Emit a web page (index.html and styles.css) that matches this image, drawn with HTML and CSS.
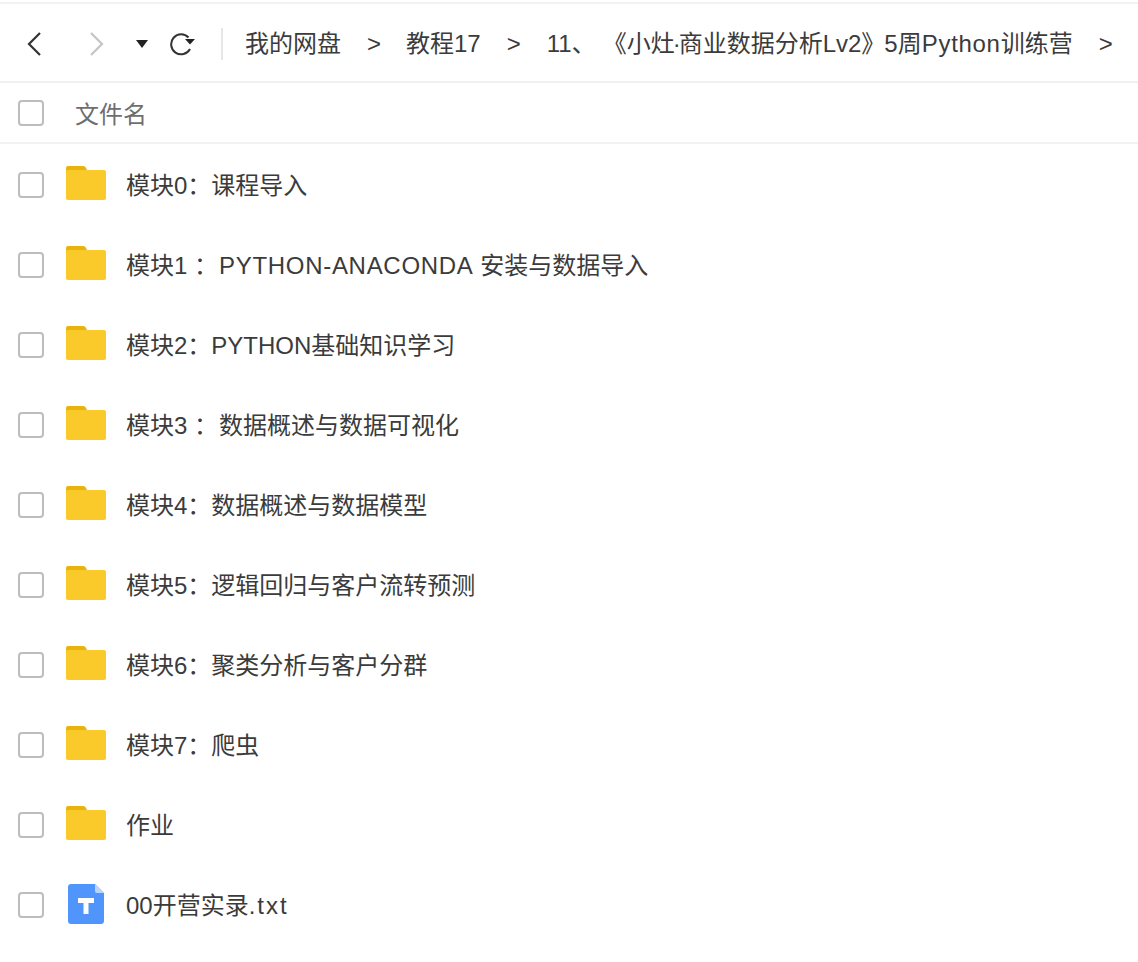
FILE: index.html
```html
<!DOCTYPE html>
<html lang="zh-CN">
<head>
<meta charset="utf-8">
<title>文件列表</title>
<link rel="stylesheet" href="styles.css">
</head>
<body>
<svg class="defs" width="0" height="0" aria-hidden="true">
  <symbol id="folder" viewBox="0 0 40 34">
    <path fill="#e8b40c" d="M2 0h15c1.500 0 2.500.7 3 2l1 2v8H0V2C0 .8.800 0 2 0z"/>
    <path fill="#f9ca2a" d="M0 6c0-1.200.8-2 2-2h36c1.200 0 2 .8 2 2v26c0 1.200-.8 2-2 2H2c-1.200 0-2-.8-2-2z"/>
  </symbol>
</svg>
<header class="toolbar">
  <svg class="nav-icon" width="20" height="26" viewBox="0 0 20 26"><path d="M15 2 4 13l11 11" fill="none" stroke="#333" stroke-width="2.200"/></svg>
  <svg class="nav-icon forward" width="20" height="26" viewBox="0 0 20 26"><path d="M5 2l11 11L5 24" fill="none" stroke="#c4c4c4" stroke-width="2.200"/></svg>
  <svg class="caret" width="12" height="8" viewBox="0 0 12 8"><path d="M0 0h12L6 8z" fill="#222"/></svg>
  <svg class="refresh" width="26" height="24" viewBox="0 0 26 24"><path d="M18.500 5.500A10 10 0 1 0 20 17" fill="none" stroke="#333" stroke-width="2"/><path d="M15 7h10l-5 5.500z" fill="#222"/></svg>
  <span class="divider"></span>
  <nav class="crumbs">
    <span>我的网盘</span><span class="sep">&gt;</span>
    <span>教程17</span><span class="sep">&gt;</span>
    <span class="long-crumb">11、<span class="bracket">《小灶<span class="dot">·</span>商业数据分析Lv2》</span><span class="after-bracket">5周<span class="wide">Python</span>训练营</span></span><span class="sep">&gt;</span>
  </nav>
</header>
<div class="head-row">
  <span class="check"></span>
  <span class="head-name">文件名</span>
</div>
<ul class="files">
  <li class="row"><span class="check"></span><svg class="folder"><use href="#folder"/></svg><span class="name">模块0：课程导入</span></li>
  <li class="row"><span class="check"></span><svg class="folder"><use href="#folder"/></svg><span class="name">模块1 ：<span class="after-colon wide">PYTHON-ANACONDA</span> 安装与数据导入</span></li>
  <li class="row"><span class="check"></span><svg class="folder"><use href="#folder"/></svg><span class="name">模块2：PYTHON基础知识学习</span></li>
  <li class="row"><span class="check"></span><svg class="folder"><use href="#folder"/></svg><span class="name">模块3 ：<span class="after-colon">数据概述与数据可视化</span></span></li>
  <li class="row"><span class="check"></span><svg class="folder"><use href="#folder"/></svg><span class="name">模块4：数据概述与数据模型</span></li>
  <li class="row"><span class="check"></span><svg class="folder"><use href="#folder"/></svg><span class="name">模块5：逻辑回归与客户流转预测</span></li>
  <li class="row"><span class="check"></span><svg class="folder"><use href="#folder"/></svg><span class="name">模块6：聚类分析与客户分群</span></li>
  <li class="row"><span class="check"></span><svg class="folder"><use href="#folder"/></svg><span class="name">模块7：爬虫</span></li>
  <li class="row"><span class="check"></span><svg class="folder"><use href="#folder"/></svg><span class="name">作业</span></li>
  <li class="row"><span class="check"></span>
    <svg class="doc" width="36" height="40" viewBox="0 0 36 40">
      <path fill="#4f95fb" d="M3 0h24l9 9v28c0 1.800-1.200 3-3 3H3c-1.800 0-3-1.200-3-3V3c0-1.800 1.200-3 3-3z"/>
      <path fill="#b9d5fd" d="M27 0l9 9h-7c-1.300 0-2-.7-2-2z"/>
      <path fill="#fff" d="M10 14h16v5h-5.500v11h-5V19H10z"/>
    </svg>
    <span class="name">00开营实录<span class="ext">.txt</span></span></li>
</ul>
</body>
</html>
```
FILE: styles.css
```css
* { box-sizing: border-box; }
html, body { margin: 0; padding: 0; background: #fff; }
body {
  width: 1138px;
  height: 962px;
  overflow: hidden;
  padding-top: 2px;
  font-family: "Noto Sans CJK SC", "Liberation Sans", sans-serif;
  font-size: 24px;
  color: #3b3b3b;
}
.defs { position: absolute; }
.toolbar {
  height: 81px;
  border-top: 2px solid #f2f2f2;
  border-bottom: 2px solid #f0f0f0;
  display: flex;
  align-items: center;
  padding-left: 25px;
  padding-top: 2px;
  white-space: nowrap;
}
.nav-icon { flex: none; }
.forward { margin-left: 41px; }
.caret { flex: none; margin-left: 30px; }
.refresh { flex: none; margin-left: 22px; }
.divider {
  flex: none;
  width: 2px;
  height: 32px;
  background: #e6e6e6;
  margin-left: 25px;
}
.crumbs {
  display: flex;
  align-items: center;
  margin-left: 22px;
  line-height: 32px;
  font-size: 24px;
  font-family: "Liberation Sans", "Noto Sans CJK SC", sans-serif;
}
.sep { margin: 0 25px 0 26px; }
.long-crumb { margin-left: 1px; }
.bracket { margin-left: 19px; }
.dot { margin: 0 -2px; }
.after-bracket { margin-left: -1px; }
.wide { letter-spacing: .7px; }
.head-row {
  height: 61px;
  border-bottom: 2px solid #f2f2f2;
  display: flex;
  align-items: center;
  padding-left: 18px;
}
.head-name { margin-left: 31px; color: #6e6e6e; }
.files { list-style: none; margin: 0; padding: 1px 0 0; }
.row {
  height: 80px;
  display: flex;
  align-items: center;
  padding-left: 18px;
}
.check {
  flex: none;
  width: 26px;
  height: 26px;
  border: 2px solid #bdbdbd;
  border-radius: 4px;
  background: #fff;
}
.folder { flex: none; width: 40px; height: 34px; margin-left: 22px; position: relative; top: -2px; }
.doc { flex: none; margin-left: 24px; position: relative; top: -1px; }
.name {
  margin-left: 20px;
  padding-bottom: 4px;
  font-family: "Liberation Sans", "Noto Sans CJK SC", sans-serif;
  white-space: nowrap;
}
.doc + .name { margin-left: 22px; }
.after-colon { margin-left: 1px; }
.ext { letter-spacing: 2px; }
```
